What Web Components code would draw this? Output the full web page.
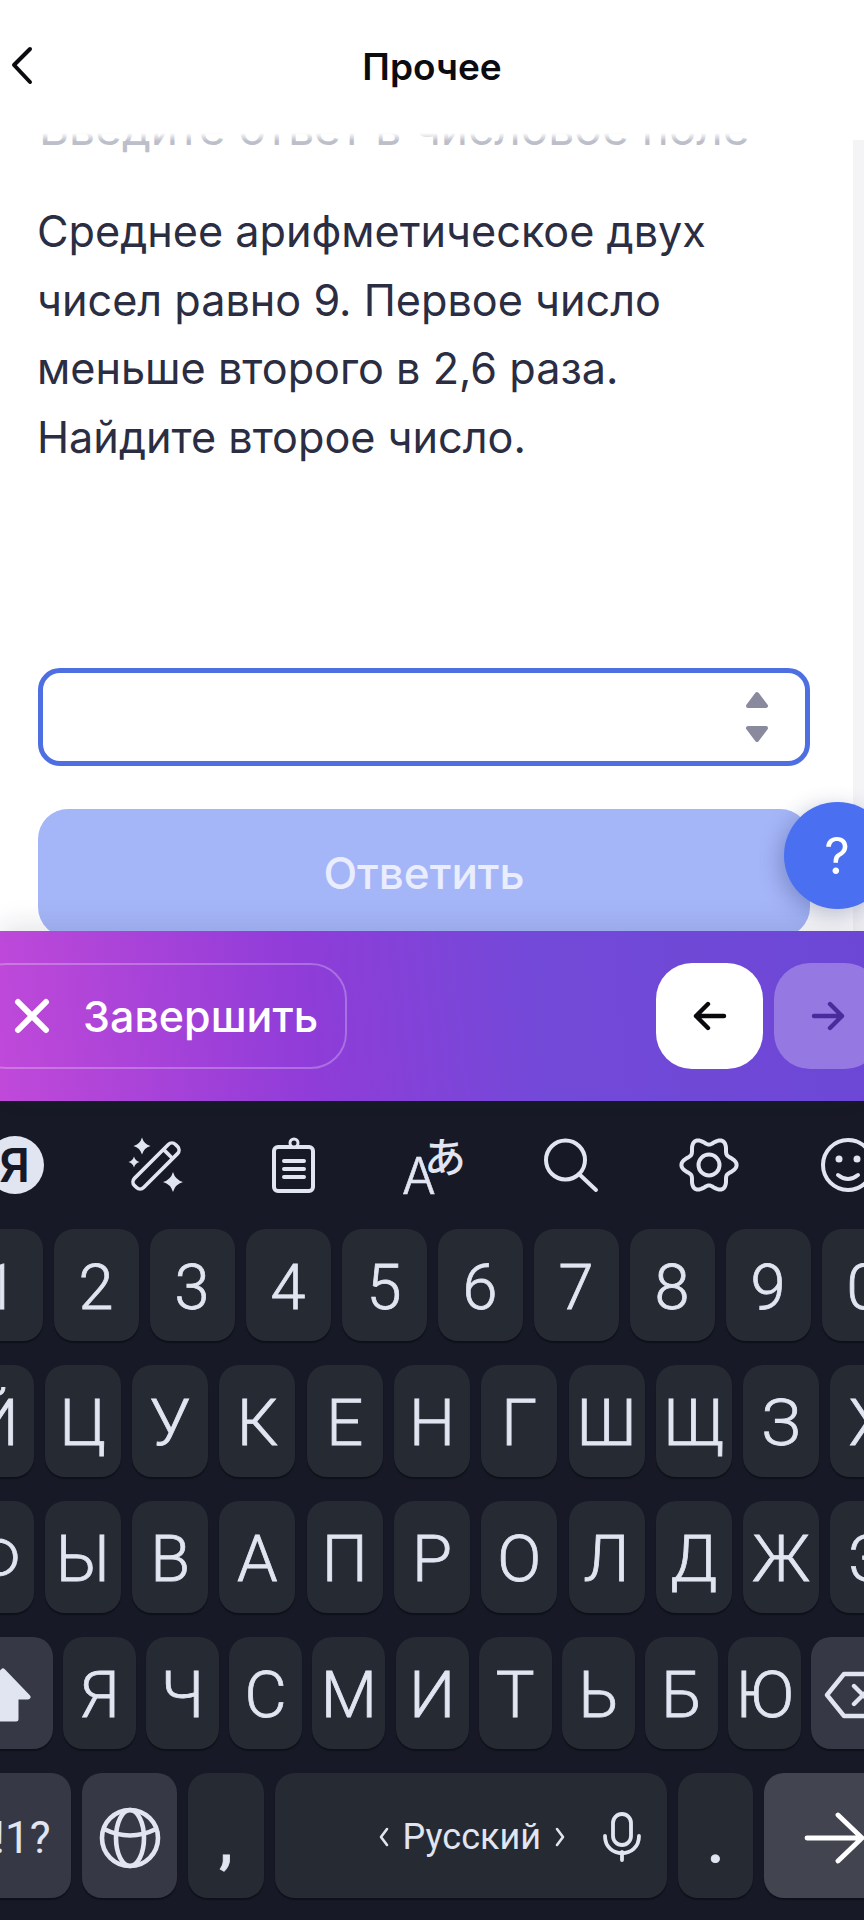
<!DOCTYPE html>
<html lang="ru">
<head>
<meta charset="utf-8">
<title>Прочее</title>
<style>
	html, body { margin: 0; padding: 0; background: #fff; }
	body { width: 864px; height: 1920px; overflow: hidden; font-family: Inter, "Liberation Sans", sans-serif; }
	quiz-screen { height: 1920px; }
</style>
</head>
<body>
<quiz-screen>
	<app-header slot="header">Прочее</app-header>
	<quiz-panel slot="panel">
		<span slot="hint">Введите ответ в числовое поле</span>
		Среднее арифметическое двух<br>чисел равно 9. Первое число<br>меньше второго в 2,6 раза.<br>Найдите второе число.
	</quiz-panel>
	<test-bar slot="bar"></test-bar>
	<key-board slot="keyboard"></key-board>
</quiz-screen>
<script>
class QuizScreen extends HTMLElement {
	constructor() {
		super();
		this.attachShadow({ mode: 'open' });
		this.shadowRoot.innerHTML = `
			<style>
				:host { display: flex; flex-direction: column; overflow: hidden; }
			</style>
			<slot name="header"></slot>
			<slot name="panel"></slot>
			<slot name="bar"></slot>
			<slot name="keyboard"></slot>
		`;
	}
}

class AppHeader extends HTMLElement {
	constructor() {
		super();
		this.attachShadow({ mode: 'open' });
		this.shadowRoot.innerHTML = `
			<style>
				:host { display: block; position: relative; z-index: 2; height: 133px; background: #fff; }
				/* scrolled text fades out under the header */
				:host::after { content: ''; position: absolute; left: 0; right: 11px; top: 100%; height: 8px; background: linear-gradient(#fff, rgba(255, 255, 255, 0)); }
				.title { padding-top: 46px; text-align: center; font: 600 37px/42px Inter, sans-serif; color: #0b0b10; }
				svg { position: absolute; left: 8px; top: 44px; }
			</style>
			<svg width="28" height="42" viewBox="0 0 28 42" fill="none" stroke="#0b0b10" stroke-width="4" stroke-linecap="round" stroke-linejoin="round">
				<path d="M22 5 L6 21 L22 38"/>
			</svg>
			<div class="title"><slot></slot></div>
		`;
	}
}

class AnswerField extends HTMLElement {
	constructor() {
		super();
		this.attachShadow({ mode: 'open' });
		this.shadowRoot.innerHTML = `
			<style>
				:host { display: flex; align-items: center; justify-content: flex-end; box-sizing: border-box; width: 772px; height: 98px; padding-right: 36px; border: 5px solid #4e6fe2; border-radius: 22px; background: #fff; }
			</style>
			<svg width="24" height="52" viewBox="0 0 24 52" fill="#8a8a9e" stroke="#8a8a9e" stroke-width="4" stroke-linejoin="round">
				<path d="M12 3 L21 15 H3 Z"/>
				<path d="M3 37 H21 L12 49 Z"/>
			</svg>
		`;
	}
}

class SubmitButton extends HTMLElement {
	constructor() {
		super();
		this.attachShadow({ mode: 'open' });
		this.shadowRoot.innerHTML = `
			<style>
				:host { display: flex; align-items: center; justify-content: center; width: 772px; height: 128px; margin-top: 43px; border-radius: 30px; background: #a5b6f8; color: #e9edfd; font: 450 44px/46px Inter, sans-serif; }
			</style>
			<slot></slot>
		`;
	}
}

class HelpBubble extends HTMLElement {
	constructor() {
		super();
		this.attachShadow({ mode: 'open' });
		this.shadowRoot.innerHTML = `
			<style>
				:host { display: flex; align-items: center; justify-content: center; position: absolute; left: 784px; top: 669px; box-sizing: border-box; width: 107px; height: 107px; padding-right: 1px; border-radius: 50%; background: #4a6ff0; color: #fff; font: 400 50px/56px Inter, sans-serif; box-shadow: -4px 6px 22px rgba(40, 50, 110, .32); }
			</style>
			<slot></slot>
		`;
	}
}

class QuizPanel extends HTMLElement {
	constructor() {
		super();
		this.attachShadow({ mode: 'open' });
		this.shadowRoot.innerHTML = `
			<style>
				:host { display: flex; position: relative; height: 798px; overflow: hidden; background: #fff; }
				.content { flex: 1; padding-left: 38px; }
				.hint { display: block; margin-top: -30px; margin-left: 1px; font: 400 46px/50px Inter, sans-serif; color: #bcbec9; white-space: nowrap; }
				.question { margin-top: 44px; margin-left: -1px; font: 400 43.2px/68.5px Inter, sans-serif; color: #2b2d42; white-space: nowrap; }
				answer-field { margin-top: 197px; }
				.track { flex: 0 0 11px; margin-top: 7px; background: #f4f4f6; }
			</style>
			<div class="content">
				<div class="hint"><slot name="hint"></slot></div>
				<div class="question"><slot></slot></div>
				<answer-field></answer-field>
				<submit-button>Ответить</submit-button>
			</div>
			<div class="track"></div>
			<help-bubble>?</help-bubble>
		`;
	}
}

class TestBar extends HTMLElement {
	constructor() {
		super();
		this.attachShadow({ mode: 'open' });
		this.shadowRoot.innerHTML = `
			<style>
				:host { display: flex; align-items: center; position: relative; z-index: 1; height: 170px; background: linear-gradient(84deg, #c049d9 0%, #8f3cd8 36%, #7349d8 62%, #6c47d5 100%); box-shadow: 0 -8px 24px rgba(30, 30, 70, .1); overflow: hidden; }
				.finish { display: flex; align-items: center; flex: none; box-sizing: border-box; height: 106px; margin-left: -30px; padding: 0 0 0 42px; width: 377px; gap: 33px; border: 2px solid rgba(255, 255, 255, .26); border-radius: 36px; color: #fff; font: 500 43px/46px Inter, sans-serif; }
				.nav { display: flex; align-items: center; justify-content: center; flex: none; width: 107px; height: 106px; border-radius: 36px; }
				.back { margin-left: auto; background: #fff; }
				.next { margin-left: 11px; margin-right: -17px; background: #9678e2; }
			</style>
			<div class="finish">
				<svg width="36" height="36" viewBox="0 0 36 36" fill="none" stroke="#fff" stroke-width="6" stroke-linecap="round"><path d="M4 4 L32 32 M32 4 L4 32"/></svg>
				<span>Завершить</span>
			</div>
			<div class="nav back">
				<svg width="34" height="30" viewBox="0 0 34 30" fill="none" stroke="#0a0a0e" stroke-width="4.4" stroke-linecap="round" stroke-linejoin="round"><path d="M31 15 H3 M15 3 L3 15 L15 27"/></svg>
			</div>
			<div class="nav next">
				<svg width="34" height="30" viewBox="0 0 34 30" fill="none" stroke="#492b9c" stroke-width="4.4" stroke-linecap="round" stroke-linejoin="round"><path d="M3 15 H31 M19 3 L31 15 L19 27"/></svg>
			</div>
		`;
	}
}

class KbKey extends HTMLElement {
	static get observedAttributes() { return ['w', 'tone']; }

	constructor() {
		super();
		this.attachShadow({ mode: 'open' });
		this.shadowRoot.innerHTML = `
			<style>
				:host { display: flex; align-items: center; justify-content: center; flex: 0 0 auto; box-sizing: border-box; height: 100%; padding-top: 4px; border-radius: 20px; background: #262a32; box-shadow: 0 2px 1px #0f111a; color: #e1e5f1; font: 300 65px/1 Roboto, sans-serif; -webkit-text-stroke: .8px #e1e5f1; }
				:host([tone="mod"]) { background: #363945; }
				:host([tone="enter"]) { background: #42454f; }
			</style>
			<slot></slot>
		`;
	}

	attributeChangedCallback(name, oldValue, value) {
		if (name === 'w') this.style.width = value + 'px';
	}
}

// six soft lobes, peaks on the left and right
function gearPath(cx, cy) {
	const pts = [];
	for (let i = 0; i < 120; i++) {
		const a = i * Math.PI / 60;
		const r = 24 + 3.6 * Math.cos(6 * a);
		pts.push((cx + r * Math.cos(a)).toFixed(1) + ' ' + (cy + r * Math.sin(a)).toFixed(1));
	}
	return 'M' + pts.join(' L') + ' Z';
}

function star(x, y, r) {
	const c = r * 0.22;
	return `M${x} ${y - r} Q${x + c} ${y - c} ${x + r} ${y} Q${x + c} ${y + c} ${x} ${y + r} Q${x - c} ${y + c} ${x - r} ${y} Q${x - c} ${y - c} ${x} ${y - r} Z`;
}

const TOOL_ICONS = [
	`<circle cx="29" cy="32" r="29" fill="#e1e5f1"/>
	 <text x="28.5" y="49" text-anchor="middle" font-family="Inter, sans-serif" font-weight="600" font-size="47" fill="#171a26">Я</text>`,
	`<path d="${star(49, 49, 10)} ${star(18, 13, 8.5)} ${star(10, 29, 5.5)}" fill="#e1e5f1"/>
	 <g transform="rotate(45 32 33)" fill="none" stroke="#e1e5f1" stroke-width="3.6">
		<rect x="25.5" y="4" width="13" height="58" rx="5"/>
		<path d="M25.5 16 H38.5"/>
	 </g>`,
	`<g fill="none" stroke="#e1e5f1" stroke-width="4" stroke-linecap="round">
		<rect x="12" y="14" width="39" height="44" rx="4"/>
		<circle cx="32" cy="10" r="4" fill="#171a26" stroke-width="3"/>
		<path d="M22 28 H42 M22 36 H42 M22 44 H42"/>
	 </g>`,
	`<text x="2" y="61" font-family="Inter, sans-serif" font-weight="300" font-size="50" fill="#e1e5f1" stroke="#e1e5f1" stroke-width=".6">A</text>
	 <text x="24" y="40" font-family="'Noto Sans CJK JP', sans-serif" font-weight="500" font-size="42" fill="#e1e5f1">あ</text>`,
	`<g fill="none" stroke="#e1e5f1" stroke-width="4" stroke-linecap="round">
		<circle cx="27.5" cy="27" r="19.5"/>
		<path d="M41 41 L58 57"/>
	 </g>`,
	`<g fill="none" stroke="#e1e5f1" stroke-width="4" stroke-linejoin="round">
		<path d="${gearPath(33, 32)}"/>
		<circle cx="33" cy="32" r="10.5"/>
	 </g>`,
	`<g fill="none" stroke="#e1e5f1" stroke-width="4" stroke-linecap="round">
		<circle cx="34" cy="32" r="25"/>
		<path d="M24 42 Q34 50 44 42"/>
	 </g>
	 <circle cx="25" cy="26" r="3.5" fill="#e1e5f1"/>
	 <circle cx="43" cy="26" r="3.5" fill="#e1e5f1"/>`
];

const letterRow = (keys, w) => keys.split('').map(k => `<kb-key w="${w}">${k}</kb-key>`).join('');

class KeyBoard extends HTMLElement {
	constructor() {
		super();
		this.attachShadow({ mode: 'open' });
		this.shadowRoot.innerHTML = `
			<style>
				:host { display: block; height: 819px; overflow: hidden; background: #171a26; }
				.tools { display: flex; justify-content: center; align-items: center; height: 128px; }
				.tools div { flex: 0 0 138px; display: flex; justify-content: center; }
				.tools svg { overflow: visible; }
				.rows { display: flex; flex-direction: column; gap: 24px; }
				.row { display: flex; justify-content: center; height: 112px; }
				.digits { gap: 11px; }
				.digits kb-key { font-size: 63px; }
				.letters { gap: 11.3px; }
				.bottom { gap: 11px; height: 125px; }
				.wide { gap: 10.2px; }
				.label { font-size: 44px; font-weight: 400; -webkit-text-stroke: 0; }
				.punct { align-items: flex-end; padding-bottom: 26px; box-sizing: border-box; }
				.space { justify-content: flex-end; gap: 38px; padding-top: 2px; padding-right: 26px; font-size: 36px; font-weight: 400; -webkit-text-stroke: 0; box-sizing: border-box; }
				.lang { display: flex; align-items: center; gap: 14px; }
			</style>
			<div class="tools">
				${TOOL_ICONS.map(svg => `<div><svg width="64" height="64" viewBox="0 0 64 64">${svg}</svg></div>`).join('')}
			</div>
			<div class="rows">
				<div class="row digits">${letterRow('1234567890', 85)}</div>
				<div class="row letters">${letterRow('ЙЦУКЕНГШЩЗХ', 76)}</div>
				<div class="row letters">${letterRow('ФЫВАПРОЛДЖЭ', 76)}</div>
				<div class="row wide">
					<kb-key w="100" tone="mod">
						<svg width="58" height="56" viewBox="0 0 58 56" fill="#e1e5f1" stroke="#e1e5f1" stroke-width="5" stroke-linejoin="round"><path d="M29 4 L54 30 H42 V52 H16 V30 H4 Z"/></svg>
					</kb-key>
					${letterRow('ЯЧСМИТЬБЮ', 73)}
					<kb-key w="100" tone="mod">
						<svg width="74" height="50" viewBox="0 0 74 50" fill="none" stroke="#e1e5f1" stroke-width="4.4" stroke-linecap="round" stroke-linejoin="round"><path d="M3 25 L20 4 H68 Q72 4 72 8 V42 Q72 46 68 46 H20 Z M30 16 L48 34 M48 16 L30 34"/></svg>
					</kb-key>
				</div>
				<div class="row bottom">
					<kb-key w="98" tone="mod" class="label">!1?</kb-key>
					<kb-key w="95" tone="mod">
						<svg width="64" height="64" viewBox="0 0 64 64" fill="none" stroke="#e1e5f1" stroke-width="4.6"><circle cx="32" cy="32" r="28"/><ellipse cx="32" cy="32" rx="14" ry="28"/><path d="M6 23 Q32 36 58 23"/></svg>
					</kb-key>
					<kb-key w="76" class="punct" style="font-size:60px;font-weight:500">,</kb-key>
					<kb-key w="392" class="space">
						<span class="lang">
							<svg width="10" height="22" viewBox="0 0 10 22" fill="none" stroke="#e1e5f1" stroke-width="2.6" stroke-linecap="round" stroke-linejoin="round"><path d="M8 3 L2 11 L8 19"/></svg>
							<span>Русский</span>
							<svg width="10" height="22" viewBox="0 0 10 22" fill="none" stroke="#e1e5f1" stroke-width="2.6" stroke-linecap="round" stroke-linejoin="round"><path d="M2 3 L8 11 L2 19"/></svg>
						</span>
						<svg width="38" height="50" viewBox="0 0 38 50" fill="none" stroke="#e1e5f1" stroke-width="3.8" stroke-linecap="round"><rect x="10" y="2" width="18" height="31" rx="9"/><path d="M2 24 C2 47 36 47 36 24 M19 40 V48"/></svg>
					</kb-key>
					<kb-key w="75" class="punct" style="font-size:60px;font-weight:500">.</kb-key>
					<kb-key w="127" tone="enter">
						<svg style="margin-left:14px" width="62" height="52" viewBox="0 0 62 52" fill="none" stroke="#fff" stroke-width="4.8" stroke-linecap="round" stroke-linejoin="round"><path d="M3 26 H58 M34 3 L58 26 L34 49"/></svg>
					</kb-key>
				</div>
			</div>
		`;
	}
}

customElements.define('quiz-screen', QuizScreen);
customElements.define('app-header', AppHeader);
customElements.define('answer-field', AnswerField);
customElements.define('submit-button', SubmitButton);
customElements.define('help-bubble', HelpBubble);
customElements.define('quiz-panel', QuizPanel);
customElements.define('test-bar', TestBar);
customElements.define('kb-key', KbKey);
customElements.define('key-board', KeyBoard);
</script>
</body>
</html>
